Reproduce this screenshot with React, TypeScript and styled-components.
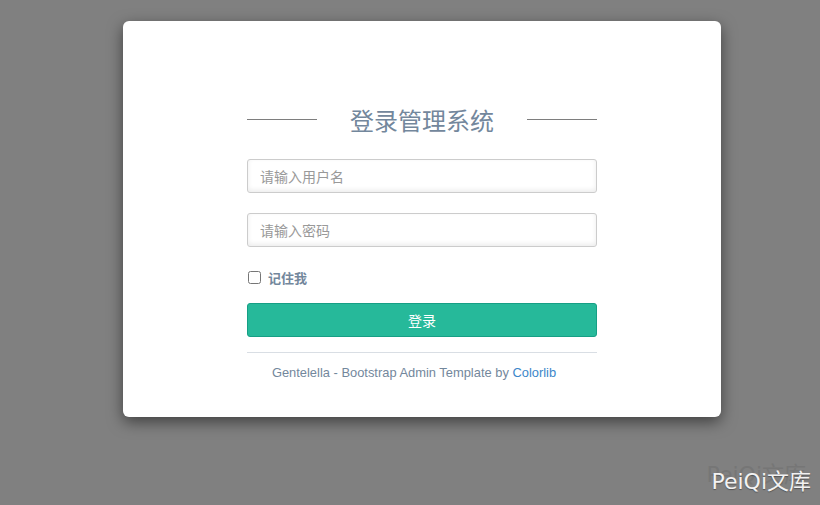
import React from 'react';
import styled, { createGlobalStyle } from 'styled-components';

const GlobalStyle = createGlobalStyle`
  html, body {
    margin: 0;
    padding: 0;
    background: #808080;
    font-family: "Liberation Sans", "Noto Sans CJK SC", sans-serif;
  }
`;

const Backdrop = styled.div`
  width: 820px;
  height: 505px;
  padding: 21px 0 0 123px;
  box-sizing: border-box;
  position: relative;
  overflow: hidden;
`;

const Card = styled.div`
  width: 598px;
  height: 396px;
  box-sizing: border-box;
  background: #fff;
  border-radius: 6px;
  box-shadow: 0 5px 15px rgba(0, 0, 0, 0.5);
  padding-top: 83px;
  display: flex;
  justify-content: center;
`;

const Form = styled.form`
  width: 350px;
  display: flex;
  flex-direction: column;
`;

const Title = styled.h1`
  margin: 0 0 25px;
  height: 30px;
  display: flex;
  align-items: center;
  gap: 33px;
  font-family: "Noto Sans CJK SC", sans-serif;
  font-size: 24px;
  font-weight: 400;
  color: #73879c;

  &::before,
  &::after {
    content: '';
    flex: 1;
    height: 1px;
    background: #7e7e7e;
  }
`;

const Input = styled.input`
  height: 34px;
  box-sizing: border-box;
  margin-bottom: 20px;
  padding: 0 12px;
  border: 1px solid #ccc;
  border-radius: 3px;
  box-shadow: 0 1px 0 #fff, inset 0 -2px 5px rgba(0, 0, 0, 0.08);
  font-family: "Noto Sans CJK SC", sans-serif;
  font-size: 14px;
  color: #555;
  outline: none;

  &::placeholder {
    color: #999;
  }
`;

const RememberRow = styled.label`
  height: 20px;
  display: flex;
  align-items: center;
  gap: 7px;
  margin-bottom: 16px;
  font-family: "Noto Sans CJK SC", sans-serif;
  font-size: 13px;
  font-weight: 700;
  color: #73879c;

  input {
    width: 13px;
    height: 13px;
    margin: 0 0 0 1px;
  }
`;

const SubmitButton = styled.button`
  height: 34px;
  border: 1px solid #169f85;
  border-radius: 3px;
  background: #26b99a;
  color: #fff;
  font-family: "Noto Sans CJK SC", sans-serif;
  font-size: 14px;
  cursor: pointer;
`;

const Divider = styled.div`
  height: 1px;
  background: #d9dee4;
  margin: 15px 0 10px;
`;

const Footer = styled.p`
  margin: 0;
  line-height: 20px;
  text-align: center;
  padding-right: 16px;
  font-size: 12.9px;
  color: #73879c;

  a {
    color: #3b86c9;
    text-decoration: none;
  }
`;

const Watermark = styled.div`
  position: absolute;
  right: 9px;
  bottom: 10px;
  font-family: "DejaVu Sans", "Noto Sans CJK SC", sans-serif;
  font-size: 22px;
  line-height: 26px;
`;

const WatermarkGhost = styled.span`
  position: absolute;
  left: -5px;
  top: -7px;
  color: #767676;
  white-space: nowrap;
`;

const WatermarkText = styled.span`
  position: relative;
  color: #f2f2f2;
  text-shadow: 0 1px 1px rgba(0, 0, 0, 0.35);
`;

const App: React.FC = () => {
  return (
    <>
      <GlobalStyle />
      <Backdrop>
        <Card>
          <Form onSubmit={(e) => e.preventDefault()}>
            <Title>登录管理系统</Title>
            <Input type="text" placeholder="请输入用户名" />
            <Input type="password" placeholder="请输入密码" />
            <RememberRow>
              <input type="checkbox" />
              记住我
            </RememberRow>
            <SubmitButton type="submit">登录</SubmitButton>
            <Divider />
            <Footer>
              Gentelella - Bootstrap Admin Template by <a href="#">Colorlib</a>
            </Footer>
          </Form>
        </Card>
        <Watermark>
          <WatermarkGhost>PeiQi文库</WatermarkGhost>
          <WatermarkText>PeiQi文库</WatermarkText>
        </Watermark>
      </Backdrop>
    </>
  );
};

export default App;
